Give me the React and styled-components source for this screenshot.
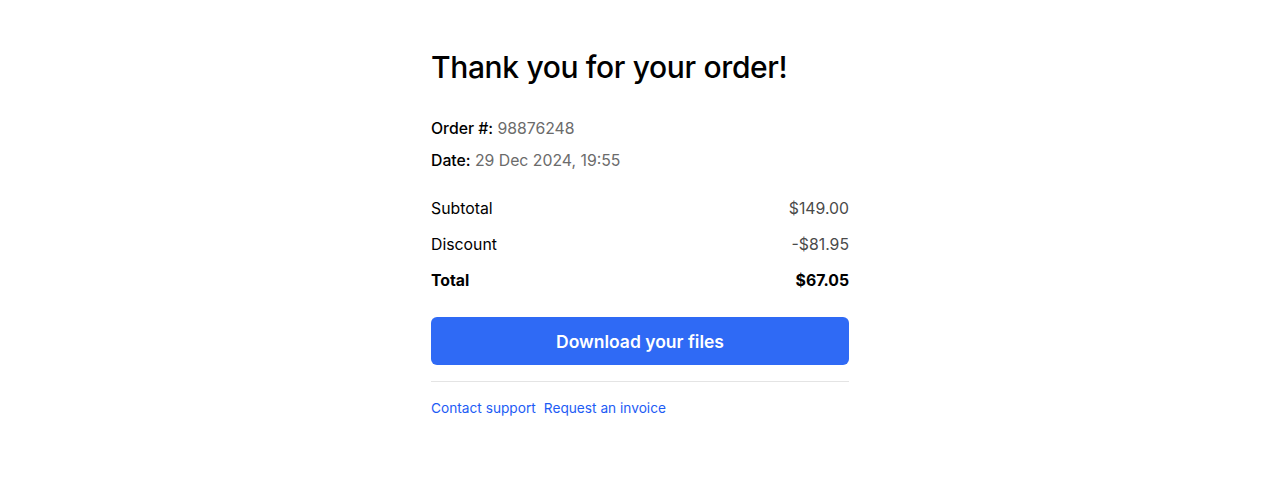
import React from 'react';
import styled, { createGlobalStyle } from 'styled-components';

const GlobalStyle = createGlobalStyle`
  body {
    margin: 0;
    background: #fff;
    font-family: 'Inter', 'Liberation Sans', sans-serif;
    color: #000;
  }
`;

const Page = styled.div`
  display: flex;
  justify-content: center;
  padding-top: 49px;
`;

const Card = styled.div`
  width: 418px;
  display: flex;
  flex-direction: column;
`;

const Title = styled.h1`
  font-size: 30px;
  font-weight: 500;
  letter-spacing: -0.35px;
  line-height: 36px;
  margin: 0 0 34px;
`;

const Meta = styled.div`
  display: flex;
  flex-direction: column;
  gap: 13px;
  font-size: 15.8px;
  line-height: 19px;
  margin-bottom: 29px;
`;

const MetaRow = styled.div`
  font-weight: 500;
  span {
    font-weight: 400;
    color: #6b6b6b;
  }
`;

const Totals = styled.div`
  display: flex;
  flex-direction: column;
  gap: 17px;
  margin-bottom: 27px;
`;

const Line = styled.div`
  display: flex;
  justify-content: space-between;
  font-size: 15.8px;
  line-height: 19px;
  font-weight: ${p => (p.$bold ? 700 : 400)};
  color: #000;
`;

const Amount = styled.span`
  color: ${p => (p.$bold ? '#000' : '#4a4a4a')};
`;

const Button = styled.button`
  height: 48px;
  border: none;
  border-radius: 6px;
  background: #2f6af5;
  color: #fff;
  font-family: inherit;
  font-size: 17.5px;
  font-weight: 600;
  cursor: pointer;
`;

const Divider = styled.hr`
  border: none;
  border-top: 1px solid #e4e4e4;
  margin: 16px 0 18px;
`;

const Links = styled.div`
  display: flex;
  gap: 8px;
`;

const Link = styled.a`
  font-size: 13.7px;
  line-height: 16px;
  color: #1d5cf5;
  text-decoration: none;
`;

export default function App() {
  return (
    <>
      <GlobalStyle />
      <Page>
        <Card>
          <Title>Thank you for your order!</Title>
          <Meta>
            <MetaRow>Order #: <span>98876248</span></MetaRow>
            <MetaRow>Date: <span>29 Dec 2024, 19:55</span></MetaRow>
          </Meta>
          <Totals>
            <Line><span>Subtotal</span><Amount>$149.00</Amount></Line>
            <Line><span>Discount</span><Amount>-$81.95</Amount></Line>
            <Line $bold><span>Total</span><Amount $bold>$67.05</Amount></Line>
          </Totals>
          <Button>Download your files</Button>
          <Divider />
          <Links>
            <Link href="#">Contact support</Link>
            <Link href="#">Request an invoice</Link>
          </Links>
        </Card>
      </Page>
    </>
  );
}
